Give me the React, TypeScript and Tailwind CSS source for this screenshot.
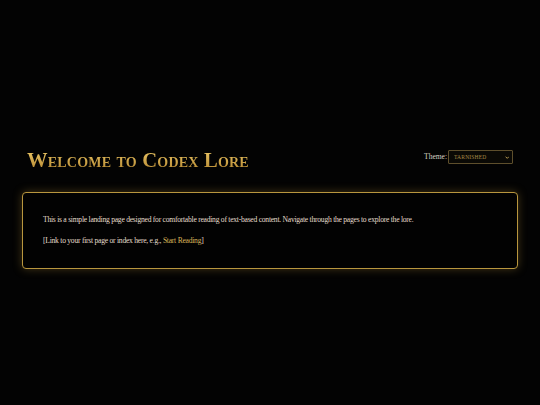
import { useState } from "react";

const themes = ["Tarnished", "Parchment", "Midnight"];

export default function App() {
  const [theme, setTheme] = useState("Tarnished");

  return (
    <div className="min-h-screen w-full bg-[#030303] font-['Liberation_Serif',serif] text-[#e6dfcf]">
      <div className="pt-[149px]">
        <header className="flex items-start justify-between pl-[27px] pr-[27px]">
          <h1 className="bg-gradient-to-b from-[#f0cc6a] to-[#b3862f] bg-clip-text text-[20.6px] font-bold leading-[22px] tracking-[0.2px] text-transparent [font-variant:small-caps]">
            Welcome to Codex Lore
          </h1>
          <div className="mt-[1px] flex items-center gap-[1px] text-[7.5px] text-[#d8d2c4]">
            <label htmlFor="theme">Theme:</label>
            <div className="relative">
              <select
                id="theme"
                value={theme}
                onChange={(e) => setTheme(e.target.value)}
                className="block h-[14px] w-[65px] appearance-none rounded-[1px] border border-[#5e4f2c] bg-[#0a0905] pl-[5px] text-[5.5px] uppercase tracking-[0.2px] text-[#a88a45] outline-none"
              >
                {themes.map((t) => (
                  <option key={t} value={t}>
                    {t}
                  </option>
                ))}
              </select>
              <svg
                viewBox="0 0 8 5"
                className="pointer-events-none absolute right-[4px] top-[5.5px] h-[3px] w-[4.5px]"
              >
                <path d="M1 1 L4 4 L7 1" fill="none" stroke="#c7a75a" strokeWidth="1.6" />
              </svg>
            </div>
          </div>
        </header>

        <main className="mx-[22px] mt-[21px] rounded-[4px] border border-[#b8963e] bg-[#020202] px-[20px] pb-[22px] pt-[22px] shadow-[0_0_10px_rgba(190,150,60,0.35)]">
          <p className="text-[7.6px] leading-[10px] tracking-[-0.25px] text-[#e4ddcd]">
            This is a simple landing page designed for comfortable reading of
            text-based content. Navigate through the pages to explore the lore.
          </p>
          <p className="mt-[11px] text-[7.6px] leading-[10px] tracking-[-0.25px] text-[#e4ddcd]">
            [Link to your first page or index here, e.g.,{" "}
            <a href="#" className="text-[#d9b55a]">
              Start Reading
            </a>
            ]
          </p>
        </main>
      </div>
    </div>
  );
}
